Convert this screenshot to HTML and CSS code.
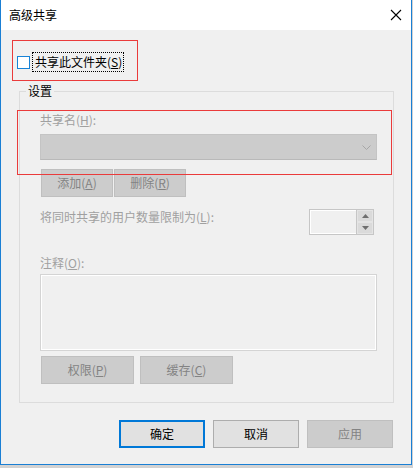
FILE: index.html
```html
<!DOCTYPE html>
<html lang="zh-CN">
<head>
<meta charset="utf-8">
<title>高级共享</title>
<link rel="stylesheet" href="styles.css">
</head>
<body>
<div class="window">
  <div class="titlebar">
    <span class="title">高级共享</span>
    <svg class="close" width="12" height="12" viewBox="0 0 12 12"><path d="M1 1 L11 11 M11 1 L1 11" stroke="#000" stroke-width="1.1" fill="none"/></svg>
  </div>
  <div class="content">
    <div class="share-row">
      <span class="box"></span>
      <span class="focus">共享此文件夹(<u>S</u>)</span>
    </div>
    <fieldset class="group">
      <legend>设置</legend>
      <div class="lbl">共享名(<u>H</u>):</div>
      <div class="combo">
        <svg class="chev" width="9" height="5" viewBox="0 0 9 5"><path d="M0.5 0.5 L4.5 4.5 L8.5 0.5" stroke="#a6a6a6" fill="none"/></svg>
      </div>
      <div class="btnrow small">
        <button class="btn dis">添加(<u>A</u>)</button>
        <button class="btn dis">删除(<u>R</u>)</button>
      </div>
      <div class="limit-row">
        <span class="lbl">将同时共享的用户数量限制为(<u>L</u>):</span>
        <div class="spin">
          <div class="spin-edit"></div>
          <div class="spin-btns">
            <span class="sb"><svg width="7" height="4" viewBox="0 0 7 4"><path d="M0 4 L3.5 0 L7 4 Z" fill="#6f6f6f"/></svg></span>
            <span class="sb"><svg width="7" height="4" viewBox="0 0 7 4"><path d="M0 0 L7 0 L3.5 4 Z" fill="#6f6f6f"/></svg></span>
          </div>
        </div>
      </div>
      <div class="lbl lbl-comment">注释(<u>O</u>):</div>
      <div class="textarea"></div>
      <div class="btnrow wide">
        <button class="btn dis">权限(<u>P</u>)</button>
        <button class="btn dis">缓存(<u>C</u>)</button>
      </div>
    </fieldset>
    <div class="footer">
      <button class="btn primary">确定</button>
      <button class="btn">取消</button>
      <button class="btn dis">应用</button>
    </div>
    <div class="annot a1"></div>
    <div class="annot a2"></div>
  </div>
</div>
</body>
</html>
```

FILE: styles.css
```css
* { box-sizing: border-box; }
html, body { margin: 0; padding: 0; }
body {
  background: #d2d2d2;
  width: 413px;
  height: 468px;
  overflow: hidden;
  font-family: "Microsoft YaHei UI", "Noto Sans CJK SC", "Noto Sans", sans-serif;
  font-size: 12px;
  line-height: 16px;
  color: #000;
}
.window {
  width: 412px;
  height: 465px;
  border: 1px solid #1a7fd4;
  border-top: none;
  background: #f0f0f0;
  display: flex;
  flex-direction: column;
}
.titlebar {
  height: 30px;
  background: #fff;
  display: flex;
  align-items: center;
  justify-content: space-between;
  padding: 0 9px 0 8px;
  flex: none;
}
.title { font-size: 12px; line-height: 16px; }
.close { display: block; }
.content {
  position: relative;
  flex: 1;
  padding: 0 18px 0 0;
}
.share-row {
  margin-top: 22px;
  margin-left: 16px;
  height: 20px;
  display: flex;
  align-items: center;
}
.box {
  width: 13px;
  height: 13px;
  border: 1px solid #1883d7;
  background: #fff;
  margin-right: 3px;
  flex: none;
}
.focus {
  outline: 1px dotted #000;
  outline-offset: 0;
  padding: 1px 1px 1px 2px;
  line-height: 16px;
}
.group {
  margin: 11px 0 0 18px;
  width: 375px;
  border: 1px solid #dcdcdc;
  padding: 13px 16px 18px 20px;
  min-width: 0;
}
.group legend {
  padding: 0 2px;
  margin-left: -14px;
  line-height: 16px;
}
.lbl { color: #a0a0a0; line-height: 16px; }
.combo {
  margin-top: 6px;
  height: 26px;
  background: #cccccc;
  border: 1px solid #c4c4c4;
  border-bottom-color: #b9b9b9;
  display: flex;
  align-items: center;
  justify-content: flex-end;
  padding-right: 5px;
}
.chev { display: block; }
.btnrow { display: flex; margin-left: 1px; }
.btnrow.small { margin-top: 9px; gap: 1px; }
.btnrow.small .btn { width: 72px; height: 28px; }
.btnrow.wide { margin-top: 5px; gap: 6px; }
.btnrow.wide .btn { width: 93px; height: 28px; }
.btn {
  font-family: inherit;
  font-size: 12px;
  line-height: 16px;
  margin: 0;
  padding: 0;
  background: #e1e1e1;
  border: 1px solid #adadad;
  color: #000;
  border-radius: 0;
}
.btn.dis {
  background: #cccccc;
  border-color: #bfbfbf;
  color: #838383;
}
.btn.primary { border: 2px solid #0078d7; }
.limit-row {
  margin-top: 12px;
  display: flex;
  justify-content: space-between;
  align-items: flex-start;
  padding-right: 3px;
}
.spin {
  width: 65px;
  height: 26px;
  border: 1px solid #c6c6c6;
  display: flex;
  background: #f0f0f0;
}
.spin-edit {
  flex: 1;
  border: 1px solid #fff;
  border-right: none;
}
.spin-btns {
  width: 17px;
  display: flex;
  flex-direction: column;
  border-left: 1px solid #c6c6c6;
  background: #dadada;
}
.sb {
  flex: 1;
  display: flex;
  align-items: center;
  justify-content: center;
  border: 1px solid #e4e4e4;
}
.sb svg { display: block; }
.lbl-comment { margin-top: 20px; }
.textarea {
  margin-top: 3px;
  height: 77px;
  border: 1px solid #d4d4d4;
  box-shadow: inset 0 0 0 1px #fff;
}
.footer {
  margin-top: 17px;
  display: flex;
  justify-content: flex-end;
  gap: 8px;
}
.footer .btn { width: 86px; height: 28px; }
.annot {
  position: absolute;
  border: 1px solid #ea3b3b;
  pointer-events: none;
}
.a1 { left: 11px; top: 10px; width: 126px; height: 41px; }
.a2 { left: 16px; top: 80px; width: 375px; height: 65px; }
```
